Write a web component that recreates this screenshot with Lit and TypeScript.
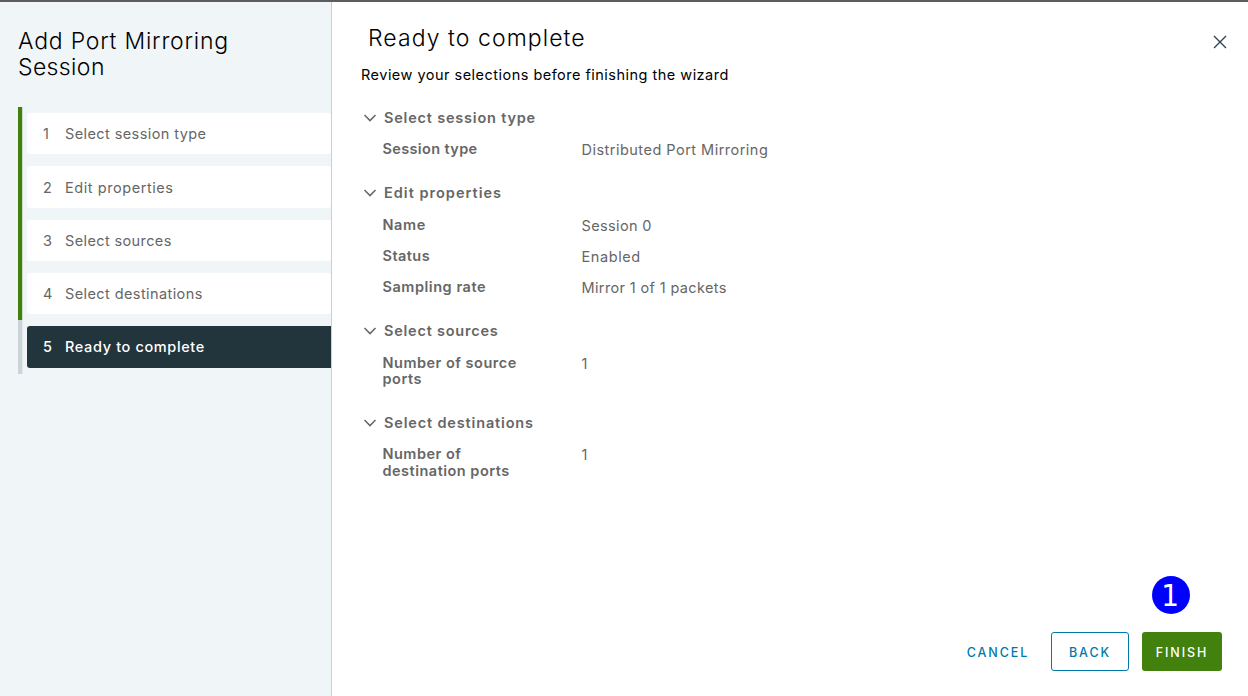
import { LitElement, html, css } from "lit";
import { customElement } from "lit/decorators.js";
import { classMap } from "lit/directives/class-map.js";
import { styleMap } from "lit/directives/style-map.js";

/** A piece of text with its letter tracking in pixels. */
interface Label { text: string; track: number; }
interface Row { label: Label; value: Label; }
interface Section { title: Label; rows: Row[]; }

const t = (text: string, track: number): Label => ({ text, track });
const tracked = (l: Label) => html`<span style=${styleMap({ letterSpacing: `${l.track}px` })}>${l.text}</span>`;

const STEPS: Label[] = [
  t("Select session type", 0.41),
  t("Edit properties", 0.56),
  t("Select sources", 0.38),
  t("Select destinations", 0.41),
  t("Ready to complete", 0.63),
];

const SECTIONS: Section[] = [
  {
    title: t("Select session type", 0.8),
    rows: [{ label: t("Session type", 0.36), value: t("Distributed Port Mirroring", 0.48) }],
  },
  {
    title: t("Edit properties", 1.02),
    rows: [
      { label: t("Name", 0.6), value: t("Session 0", 0.36) },
      { label: t("Status", 0.45), value: t("Enabled", 0.6) },
      { label: t("Sampling rate", 0.54), value: t("Mirror 1 of 1 packets", 0.36) },
    ],
  },
  { title: t("Select sources", 0.77), rows: [{ label: t("Number of source ports", 0.5), value: t("1", 0) }] },
  { title: t("Select destinations", 0.84), rows: [{ label: t("Number of destination ports", 0.49), value: t("1", 0) }] },
];

@customElement("wizard-steps")
class WizardSteps extends LitElement {
  static styles = css`
    :host { display: block; padding-left: 18px; }
    .step { display: flex; height: 53.3px; box-sizing: border-box; border-left: 4px solid #42810e; padding: 6px 0 6px 4px; box-shadow: inset 1px 0 #cfdccb; }
    .step.current { border-left-color: #cbd4d9; box-shadow: inset 1px 0 #e3eaee; }
    .box { flex: 1; display: flex; align-items: center; margin-left: 1px; background: #fff; color: #666; border-radius: 3px; font-size: 14.5px; }
    .current .box { background: #22343c; color: #fff; font-weight: 500; border-radius: 3px 0 0 3px; }
    .num { width: 22px; padding-left: 16px; }
  `;
  render() {
    return STEPS.map((s, i) => html`
      <div class=${classMap({ step: true, current: i === 4 })}>
        <div class="box"><span class="num">${i + 1}</span>${tracked(s)}</div>
      </div>`);
  }
}

@customElement("review-section")
class ReviewSection extends LitElement {
  static properties = { data: { attribute: false } };
  declare data: Section;
  static styles = css`
    :host { display: block; color: #666; font-size: 14.5px; line-height: 16.4px; padding-bottom: 12.6px; }
    .head { display: flex; align-items: center; height: 16.4px; margin-bottom: 15px; font-weight: 600; }
    .caret { width: 14px; height: 10px; margin: 0 7px 0 1px; fill: none; stroke: #666; stroke-width: 1.5; }
    .row { display: flex; margin-bottom: 14.9px; padding-left: 20.5px; }
    .label { width: 145px; margin-right: 54px; font-weight: 600; }
    .value { margin: 1px 0 -1px; }
  `;
  render() {
    return html`
      <div class="head">
        <svg class="caret" viewBox="0 0 14 10"><path d="M1.5 2 L7 7.6 L12.5 2" /></svg>
        ${tracked(this.data.title)}
      </div>
      ${this.data.rows.map((r) => html`
        <div class="row"><div class="label">${tracked(r.label)}</div><div class="value">${tracked(r.value)}</div></div>`)}
    `;
  }
}

@customElement("app-root")
class AppRoot extends LitElement {
  static styles = css`
    :host { display: flex; width: 1248px; height: 696px; box-sizing: border-box; border-top: 2px solid #5e5d5d; background: #fff; color: #000; font-family: Inter, "Open Sans", sans-serif; overflow: hidden; }
    .side { width: 332px; box-sizing: border-box; background: #f0f5f8; border-right: 1px solid #c8d0d5; }
    .name { margin: 0; padding: 26px 80px 27.1px 18px; font-size: 23px; line-height: 26px; font-weight: 300; }
    .main { flex: 1; display: flex; flex-direction: column; padding-left: 29px; }
    .top { display: flex; justify-content: space-between; padding: 21px 20px 0 7px; }
    .title { margin: 0; font-size: 23px; line-height: 30px; font-weight: 300; letter-spacing: 1.07px; }
    .close { width: 16px; height: 16px; margin-top: 11px; fill: none; stroke: #314351; stroke-width: 1.4; }
    .lead { margin: 12px 0 0; font-size: 14.5px; line-height: 20px; letter-spacing: 0.48px; }
    .review { flex: 1; padding: 25px 0 0 1px; }
    .footer { display: flex; justify-content: flex-end; padding: 0 26px 25px 0; }
    .btn { box-sizing: border-box; height: 39px; padding: 2px 0 0; border: 1px solid transparent; border-radius: 3px; background: none; color: #0079ad; font: 500 12.5px/36px Inter, sans-serif; letter-spacing: 1.95px; text-align: center; }
    .cancel { width: 80px; margin-right: 13px; }
    .back { width: 78px; margin-right: 13px; border-color: #0079ad; }
    .finish { position: relative; width: 80px; background: #42810e; color: #fff; }
    .badge { position: absolute; left: 9px; top: -57px; width: 38px; height: 38px; border-radius: 50%; background: #00f; color: #fff; font: 31px/38px "DejaVu Sans Condensed", "DejaVu Sans", sans-serif; letter-spacing: 0; text-indent: -2px; }
  `;
  render() {
    return html`
      <div class="side">
        <h1 class="name">${tracked(t("Add Port Mirroring", 0.78))} ${tracked(t("Session", 0.38))}</h1>
        <wizard-steps></wizard-steps>
      </div>
      <div class="main">
        <div class="top">
          <h2 class="title">Ready to complete</h2>
          <svg class="close" viewBox="0 0 16 16"><path d="M2 2 L14 14 M14 2 L2 14" /></svg>
        </div>
        <p class="lead">Review your selections before finishing the wizard</p>
        <div class="review">${SECTIONS.map((s) => html`<review-section .data=${s}></review-section>`)}</div>
        <div class="footer">
          <button class="btn cancel">CANCEL</button>
          <button class="btn back">BACK</button>
          <button class="btn finish">FINISH<span class="badge">1</span></button>
        </div>
      </div>`;
  }
}
